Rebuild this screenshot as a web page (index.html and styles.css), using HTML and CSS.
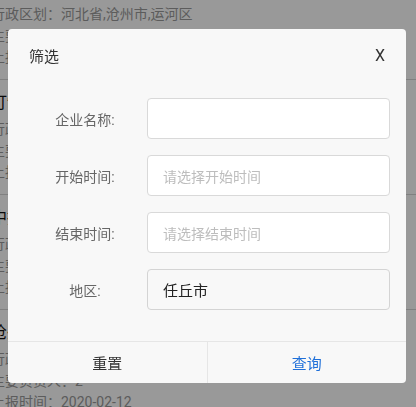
FILE: index.html
```html
<!DOCTYPE html>
<html lang="zh">
<head>
<meta charset="utf-8">
<link rel="stylesheet" href="styles.css">
</head>
<body>
<div class="page">
  <div class="item">
    <div class="title">河北渤海化工有限公司</div>
    <div class="line">行政区划：河北省,沧州市,运河区</div>
    <div class="line">主要负责人：张</div>
    <div class="line">上报时间：2020-02-12</div>
  </div>
  <div class="item">
    <div class="title">订制家具有限公司</div>
    <div class="line">行政区划：河北省,沧州市,运河区</div>
    <div class="line">主要负责人：王</div>
    <div class="line">上报时间：2020-02-12</div>
  </div>
  <div class="item">
    <div class="title">中捷化工有限公司</div>
    <div class="line">行政区划：河北省,沧州市,运河区</div>
    <div class="line">主要负责人：李</div>
    <div class="line">上报时间：2020-02-12</div>
  </div>
  <div class="item">
    <div class="title">沧州明珠有限公司</div>
    <div class="line">行政区划：河北省,沧州市,运河区</div>
    <div class="line">主要负责人：2</div>
    <div class="line">上报时间：2020-02-12</div>
  </div>
</div>
<div class="mask"></div>
<div class="dialog">
  <div class="dialog-head">
    <span class="dialog-title">筛选</span>
    <span class="dialog-close">X</span>
  </div>
  <div class="form">
    <div class="row">
      <label class="label">企业名称:</label>
      <div class="field"></div>
    </div>
    <div class="row">
      <label class="label">开始时间:</label>
      <div class="field placeholder">请选择开始时间</div>
    </div>
    <div class="row">
      <label class="label">结束时间:</label>
      <div class="field placeholder">请选择结束时间</div>
    </div>
    <div class="row">
      <label class="label">地区:</label>
      <div class="field readonly">任丘市</div>
    </div>
  </div>
  <div class="dialog-foot">
    <div class="btn btn-reset">重置</div>
    <div class="btn btn-query">查询</div>
  </div>
</div>
</body>
</html>
```

FILE: styles.css
```css
html, body {
  margin: 0;
  padding: 0;
  background: #ffffff;
  overflow: hidden;
  font-family: Roboto, "Noto Sans CJK SC", sans-serif;
}

.page {
  margin-top: -35px;
  margin-left: -9px;
  white-space: nowrap;
}

.item {
  box-sizing: border-box;
  height: 115px;
  padding-top: 12px;
  border-bottom: 1px solid #d6d6d6;
}

.title {
  font-size: 16px;
  line-height: 22px;
  color: #111;
  margin-bottom: 5px;
}

.line {
  font-size: 14px;
  line-height: 21.5px;
  color: #999;
}

.mask {
  position: fixed;
  inset: 0;
  background: rgba(0, 0, 0, 0.4);
}

.dialog {
  position: fixed;
  left: 8px;
  top: 29px;
  width: 398px;
  height: 354px;
  background: #f8f8f8;
  border-radius: 4px;
  display: flex;
  flex-direction: column;
  overflow: hidden;
}

.dialog-head {
  height: 52px;
  padding: 0 21px 0 21px;
  display: flex;
  align-items: center;
  justify-content: space-between;
  color: #333;
}

.dialog-title {
  font-size: 15px;
}

.dialog-close {
  font-size: 16px;
}

.form {
  padding: 17px 16px 0 22px;
  display: flex;
  flex-direction: column;
  gap: 16px;
}

.row {
  display: flex;
  align-items: center;
}

.label {
  width: 110px;
  margin-right: 7px;
  text-align: center;
  font-size: 14px;
  color: #666;
}

.field {
  flex: 1;
  box-sizing: border-box;
  height: 41px;
  border: 1px solid #d9d9d9;
  border-radius: 4px;
  background: #fff;
  padding-left: 15px;
  display: flex;
  align-items: center;
  font-size: 14px;
  color: #222;
}

.field.placeholder {
  color: #bdbdbd;
}

.field.readonly {
  background: #f8f8f8;
  border-color: #d4d4d4;
  font-size: 15px;
}

.dialog-foot {
  margin-top: auto;
  height: 41px;
  border-top: 1px solid #e6e6e6;
  display: flex;
}

.btn {
  flex: 1;
  display: flex;
  align-items: center;
  justify-content: center;
  font-size: 15px;
}

.btn-reset {
  color: #333;
}

.btn-query {
  color: #1e6fd9;
  border-left: 1px solid #e6e6e6;
}
```
